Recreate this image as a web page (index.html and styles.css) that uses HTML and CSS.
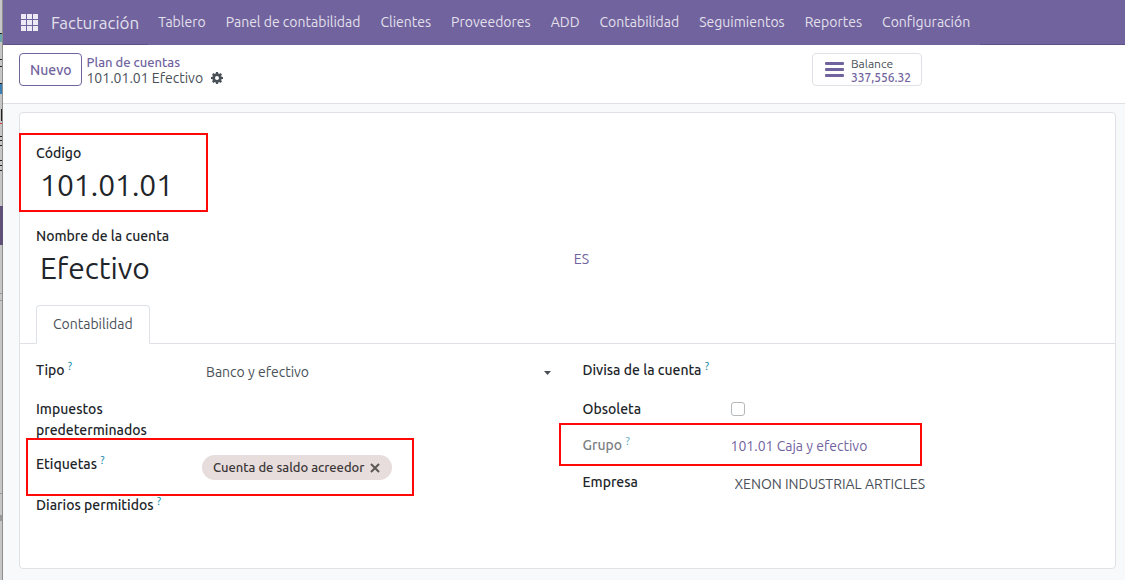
FILE: index.html
```html
<!DOCTYPE html>
<html lang="es">
<head>
<meta charset="utf-8">
<meta name="viewport" content="width=device-width, initial-scale=1">
<title>Facturación - 101.01.01 Efectivo</title>
<link rel="stylesheet" href="styles.css">
</head>
<body>
<div class="backdrop" aria-hidden="true">
  <svg width="3" height="580" viewBox="0 0 3 580">
    <path fill="#c6c6c6" d="M0 0h3v580H0z"/>
    <path fill="#5f5078" d="M0 206h3v39H0z"/>
    <path fill="#6ba5ad" d="M0 34h2v8H0z"/>
    <path fill="#3c7fb5" d="M0 84h2v10H0z"/>
    <path fill="#222" d="M0 33h2v1H0zM0 59h2v1H0zM0 66h2v1H0zM0 83h2v1H0zM1 109h1v12H1zM0 136h2v1H0zM0 140h2v1H0zM0 145h2v1H0zM0 160h2v1H0zM0 165h2v1H0zM0 170h2v1H0z"/>
    <path fill="#d33" d="M0 123h2v1H0z"/>
    <path fill="#999" d="M0 293h2v1H0zM0 300h2v1H0zM0 493h2v1H0zM0 515h2v6H0z"/>
    <path fill="#8e8e8e" d="M2 0h1v206H2zM2 245h1v335H2z"/>
  </svg>
</div>
<div class="app">
  <nav class="navbar">
    <button class="apps" type="button" aria-label="Aplicaciones">
      <svg width="17" height="17" viewBox="0 0 17 17" fill="#eeeaf5"><path d="M0 0h5v5H0zM6 0h5v5H6zM12 0h5v5h-5zM0 6h5v5H0zM6 6h5v5H6zM12 6h5v5h-5zM0 12h5v5H0zM6 12h5v5H6zM12 12h5v5h-5z"/></svg>
    </button>
    <a class="brand" href="#">Facturación</a>
    <div class="menu">
      <a href="#">Tablero</a>
      <a href="#">Panel de contabilidad</a>
      <a href="#">Clientes</a>
      <a href="#">Proveedores</a>
      <a href="#">ADD</a>
      <a href="#">Contabilidad</a>
      <a href="#">Seguimientos</a>
      <a href="#">Reportes</a>
      <a href="#">Configuración</a>
    </div>
  </nav>
  <header class="control">
    <div class="control-left">
      <button class="new" type="button">Nuevo</button>
      <div class="crumbs">
        <a href="#">Plan de cuentas</a>
        <div class="current">
          <span>101.01.01 Efectivo</span>
          <button class="gear" type="button" aria-label="Acciones">
            <svg width="12" height="12" viewBox="0 0 12 12" fill="#495057" fill-rule="evenodd"><path d="M5 0h2l.35 1.6.75.3L9.5 1.050 10.950 2.500 10.100 3.900l.3.75L12 5v2l-1.600.35-.3.75.85 1.400-1.450 1.450-1.400-.85-.75.3L7 12H5l-.35-1.600-.75-.3-1.400.85L1.050 9.500l.85-1.400-.3-.75L0 7V5l1.600-.35.3-.75-.85-1.400L2.500 1.050l1.400.85.75-.3zM6 4a2 2 0 1 0 0 4 2 2 0 0 0 0-4z"/></svg>
          </button>
        </div>
      </div>
    </div>
    <button class="stat" type="button">
      <svg width="19" height="15" viewBox="0 0 19 15" fill="#71639e"><rect width="19" height="3" rx="1"/><rect y="6" width="19" height="3" rx="1"/><rect y="12" width="19" height="3" rx="1"/></svg>
      <span class="stat-text"><span>Balance</span><span class="amount">337,556.32</span></span>
    </button>
  </header>
  <main class="content">
    <form class="sheet">
      <div class="title code">
        <label for="code">Código</label>
        <input id="code" type="text" value="101.01.01">
        <span class="mark mark-code"></span>
      </div>
      <div class="title">
        <label for="name">Nombre de la cuenta</label>
        <div class="translated">
          <input id="name" type="text" value="Efectivo">
          <button class="lang" type="button">ES</button>
        </div>
      </div>
      <div class="tabs"><button class="tab" type="button">Contabilidad</button></div>
      <div class="columns">
        <div class="group group-left">
          <label for="type">Tipo <sup>?</sup></label>
          <div class="select-wrap">
            <select id="type"><option>Banco y efectivo</option></select>
            <svg class="caret" width="7" height="4" viewBox="0 0 7 4" fill="#495057"><path d="M0 0h7L3.500 4z"/></svg>
          </div>
          <label for="taxes">Impuestos predeterminados</label>
          <input id="taxes" type="text">
          <label for="tags">Etiquetas <sup>?</sup></label>
          <div class="tags">
            <span class="tag">Cuenta de saldo acreedor
              <button type="button" aria-label="Eliminar"><svg width="10" height="10" viewBox="0 0 10 10" stroke="#5c5657" stroke-width="2"><path d="M1 1l8 8M9 1L1 9"/></svg></button>
            </span>
            <input id="tags" type="text">
          </div>
          <label for="journals">Diarios permitidos <sup>?</sup></label>
          <input id="journals" type="text">
          <span class="mark mark-tags"></span>
        </div>
        <div class="group group-right">
          <label for="currency">Divisa de la cuenta <sup>?</sup></label>
          <input id="currency" type="text">
          <label for="obsolete">Obsoleta</label>
          <div class="check"><input id="obsolete" type="checkbox"></div>
          <span class="readonly">Grupo <sup>?</sup></span>
          <a class="value" href="#">101.01 Caja y efectivo</a>
          <label for="company">Empresa</label>
          <input id="company" class="company" type="text" value="XENON INDUSTRIAL ARTICLES">
          <span class="mark mark-group"></span>
        </div>
      </div>
    </form>
  </main>
</div>
</body>
</html>
```
FILE: styles.css
```css
* { box-sizing: border-box; }

body {
  margin: 0;
  display: flex;
  min-height: 100vh;
  background: #f8f9fa;
  color: #495057;
  font: 14px/21px "Ubuntu", "Noto Sans", sans-serif;
}

button, input, select {
  margin: 0;
  padding: 0;
  border: 0;
  background: none;
  color: inherit;
  font: inherit;
  min-width: 0;
}

a { color: #71639e; text-decoration: none; }
svg { display: block; }

.backdrop { width: 3px; flex: none; background: #c6c6c6; overflow: hidden; }
.app { flex: 1; min-width: 0; display: flex; flex-direction: column; }

.navbar {
  display: flex;
  align-items: center;
  height: 45px;
  padding-left: 18px;
  background: #71639e;
  border-bottom: 1px solid #5f5187;
}
.navbar a { color: #e3e0ec; white-space: nowrap; }
.navbar .brand { margin: 0 9px 0 13px; font-size: 17px; }
.menu { display: flex; align-self: stretch; margin-bottom: -1px; background: #71639e; }
.menu a { padding: 0 10px; line-height: 44px; }

.control {
  display: flex;
  align-items: flex-start;
  justify-content: space-between;
  padding: 8px 203px 17px 16px;
  background: #fff;
  border-bottom: 1px solid #dee2e6;
}
.control-left { display: flex; gap: 4px; }
.new {
  height: 33px;
  padding: 1px 10px 0;
  border: 1px solid #71639e;
  border-radius: 4px;
  color: #71639e;
  font-weight: 500;
}
.crumbs { padding-top: 1px; line-height: 16px; }
.crumbs a { display: block; font-size: 13px; font-weight: 500; }
.current { display: flex; align-items: center; gap: 8px; }
.stat {
  display: flex;
  align-items: center;
  gap: 7px;
  height: 33px;
  padding: 0 10px 0 12px;
  border: 1px solid #dee2e6;
  border-radius: 4px;
  font-size: 12px;
  line-height: 14px;
  text-align: left;
}
.stat-text { display: flex; flex-direction: column; padding-top: 2px; }
.amount { color: #71639e; font-weight: 500; }

.content { flex: 1; padding: 8px 9px 11px 16px; display: flex; }
.sheet {
  flex: 1;
  min-width: 0;
  padding: 30px 16px 0;
  background: #fff;
  border: 1px solid #dee2e6;
  border-radius: 4px;
}

label { color: #212529; font-weight: 500; }
.title { position: relative; width: 553px; max-width: 100%; margin-bottom: 17px; }
.title label { display: block; }
.title input {
  display: block;
  width: 100%;
  height: 45px;
  padding: 0 0 3px 4px;
  color: #212529;
  font-size: 30px;
}
.translated { display: flex; align-items: center; }
.title .translated input { flex: 1; }
.lang { height: 21px; margin-bottom: 21px; color: #71639e; }

.tabs { margin: -4px -16px 0; padding: 0 16px; border-bottom: 1px solid #dee2e6; }
.tab {
  display: block;
  height: 39px;
  margin-bottom: -1px;
  padding: 0 16px;
  background: #fff;
  border: 1px solid #dee2e6;
  border-bottom-color: #fff;
  border-radius: 4px 4px 0 0;
}

.columns {
  display: grid;
  grid-template-columns: minmax(0, 1fr) minmax(0, 1fr);
  gap: 30px;
  padding-top: 16px;
}
.group { position: relative; display: grid; align-content: start; align-items: start; }
.group-left { grid-template-columns: 166px minmax(0, 1fr); grid-template-rows: 39px 55px 41px 21px; }
.group-right { grid-template-columns: 148px minmax(0, 1fr); grid-template-rows: 39px 36px 37px 21px; }
.group-left label { max-width: 150px; }
sup { color: #0180a5; font-size: 11px; line-height: 0; font-weight: 400; vertical-align: 5px; }

.select-wrap { display: flex; align-items: center; padding-top: 2px; }
.select-wrap select { appearance: none; flex: 1; padding-left: 4px; }
.caret { margin: 0 2px 0 -9px; }
.tags { display: flex; }
.tags input { flex: 1; }
.tag {
  display: flex;
  align-items: center;
  gap: 6px;
  height: 25px;
  margin-top: 1px;
  padding: 0 12px 0 11px;
  border-radius: 13px;
  background: #e6dddc;
  color: #3b3637;
  font-size: 13px;
  font-weight: 500;
  white-space: nowrap;
}
.check { padding-top: 3px; }
.check input {
  appearance: none;
  display: block;
  width: 14px;
  height: 14px;
  border: 1px solid #b5b8bb;
  border-radius: 3px;
}
.readonly { color: #7b7f83; font-weight: 500; }
.readonly sup { opacity: .7; }
.value { padding-top: 1px; }
.company { padding: 2px 0 0 4px; }

/* Callout frames drawn over the form */
.mark { position: absolute; border: 2px solid #fe0808; pointer-events: none; }
.mark-code { left: -17px; top: -10px; width: 189px; height: 79px; }
.mark-tags { left: -10px; top: 78px; width: 388px; height: 58px; }
.mark-group { left: -24px; top: 63px; width: 363px; height: 43px; }
```
